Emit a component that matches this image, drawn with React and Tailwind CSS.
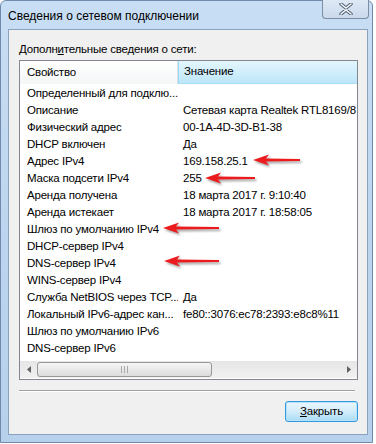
const rows = [
  ["Определенный для подклю...", ""],
  ["Описание", "Сетевая карта Realtek RTL8169/8"],
  ["Физический адрес", "00-1A-4D-3D-B1-38"],
  ["DHCP включен", "Да"],
  ["Адрес IPv4", "169.158.25.1"],
  ["Маска подсети IPv4", "255"],
  ["Аренда получена", "18 марта 2017 г. 9:10:40"],
  ["Аренда истекает", "18 марта 2017 г. 18:58:05"],
  ["Шлюз по умолчанию IPv4", ""],
  ["DHCP-сервер IPv4", ""],
  ["DNS-сервер IPv4", ""],
  ["WINS-сервер IPv4", ""],
  ["Служба NetBIOS через TCP...", "Да"],
  ["Локальный IPv6-адрес кан...", "fe80::3076:ec78:2393:e8c8%11"],
  ["Шлюз по умолчанию IPv6", ""],
  ["DNS-сервер IPv6", ""],
];

// tip x, tail x, y
const arrows = [
  [253, 300, 160],
  [205, 255, 178],
  [163, 219, 228],
  [164, 219, 261],
];

function Arrow({ tip, tail, y }) {
  const d = `M${tip} ${y} L${tip + 16} ${y - 5.5} L${tip + 13} ${y - 1.6} L${tail} ${y - 1.1} L${tail} ${y + 1.1} L${tip + 13} ${y + 1.6} L${tip + 16} ${y + 5.5} Z`;
  return (
    <g>
      <path d={d} fill="#000" opacity="0.35" transform="translate(1.5 2)" filter="url(#blur)" />
      <path d={d} fill="#ec1b1e" />
    </g>
  );
}

const App = () => {
  return (
    <div
      className="w-[376px] h-[444px] bg-white relative overflow-hidden text-[11.5px] tracking-[-0.2px] text-black"
      style={{ fontFamily: '"Liberation Sans", Arial, sans-serif' }}
    >
      <div className="w-[373px] h-[443px] rounded-t-[6px] border border-[#6f8aab] bg-gradient-to-b from-[#c8def4] via-[#bdd5ee] to-[#b7d0ec] flex flex-col">
        {/* title bar */}
        <div className="h-[28px] flex items-start justify-between">
          <span className="pl-[7px] pt-[7px] text-[12px] tracking-[0px] leading-[16px]">Сведения о сетевом подключении</span>
          <div className="mr-[3px] w-[47px] h-[19px] -mt-px rounded-b-[4px] border border-[#7d8ea3] border-t-0 bg-gradient-to-b from-[#dfe9f5] to-[#c9d9eb] flex items-center justify-center">
            <svg width="14" height="12" viewBox="0 0 14 12">
              <path d="M2 1 L7 5 L12 1 M2 11 L7 7 L12 11" stroke="#4d5d70" strokeWidth="3.4" fill="none" strokeLinecap="round" />
              <path d="M2 1 L7 5 L12 1 M2 11 L7 7 L12 11" stroke="#f4f7fb" strokeWidth="1.6" fill="none" strokeLinecap="round" />
            </svg>
          </div>
        </div>

        {/* client area */}
        <div className="ml-[7px] mr-[4px] h-[406px] border border-[#8ba2be] bg-[#f0f0f0] flex flex-col pl-[10px] pr-[9px] pt-[12px]">
          <div className="leading-[14px] h-[14px]">
            Дополн<span className="underline">и</span>тельные сведения о сети:
          </div>
          <div className="mt-[4px] h-[320px] border border-[#828790] bg-white flex flex-col">
            <div className="h-[23px] flex shrink-0">
              <div className="w-[158px] pl-[7px] flex items-center bg-gradient-to-b from-white to-[#f4f6f7] border-r border-[#dfe2e5]">
                Свойство
              </div>
              <div className="flex-1 pl-[5px] flex items-center bg-gradient-to-b from-[#e4f6fd] to-[#bde6f9] border-l border-[#96d9f9] border-b border-b-[#a9dcf5]">
                Значение
              </div>
            </div>
            <div className="pt-px flex flex-col">
              {rows.map(([k, v], i) => (
                <div key={i} className="h-[17px] flex items-center whitespace-nowrap">
                  <div className="w-[158px] shrink-0 pl-[7px] overflow-hidden">{k}</div>
                  <div className="flex-1 min-w-0 pl-[5px] overflow-hidden">{v}</div>
                </div>
              ))}
            </div>
            <div className="flex-1" />
            {/* horizontal scrollbar */}
            <div className="h-[17px] mb-px flex items-stretch bg-gradient-to-b from-[#e6e6e6] to-[#f1f1f1]">
              <div className="w-[17px] flex items-center justify-center">
                <svg width="4" height="7" viewBox="0 0 4 7"><path d="M4 0 L0 3.5 L4 7 Z" fill="#606060" /></svg>
              </div>
              <div className="w-[175px] my-px rounded-[3px] border border-[#979797] bg-gradient-to-b from-[#f6f6f6] to-[#dcdcdc] flex items-center justify-center gap-[2px]">
                <span className="w-px h-[7px] bg-[#a8a8a8]" />
                <span className="w-px h-[7px] bg-[#a8a8a8]" />
                <span className="w-px h-[7px] bg-[#a8a8a8]" />
              </div>
              <div className="flex-1" />
              <div className="w-[17px] flex items-center justify-center">
                <svg width="4" height="7" viewBox="0 0 4 7"><path d="M0 0 L4 3.5 L0 7 Z" fill="#606060" /></svg>
              </div>
            </div>
          </div>
          <div className="mt-[10px] mr-[3px] border-t border-[#a0a0a0] border-b border-b-white" />
          <div className="mt-[9px] flex justify-end">
            <button className="w-[73px] h-[21px] rounded-[3px] border border-[#3399dd] bg-gradient-to-b from-[#e9f6fd] via-[#d3edfb] to-[#a9dbf6] shadow-[inset_0_0_0_1px_#b6e3fb] leading-none">
              <span className="underline">З</span>акрыть
            </button>
          </div>
        </div>
      </div>

      {/* annotation arrows */}
      <svg className="absolute left-0 top-0 pointer-events-none" width="376" height="444">
        <defs>
          <filter id="blur" x="-10%" y="-50%" width="120%" height="200%">
            <feGaussianBlur stdDeviation="1" />
          </filter>
        </defs>
        {arrows.map(([tip, tail, y], i) => (
          <Arrow key={i} tip={tip} tail={tail} y={y} />
        ))}
      </svg>
    </div>
  );
};

export default App;
